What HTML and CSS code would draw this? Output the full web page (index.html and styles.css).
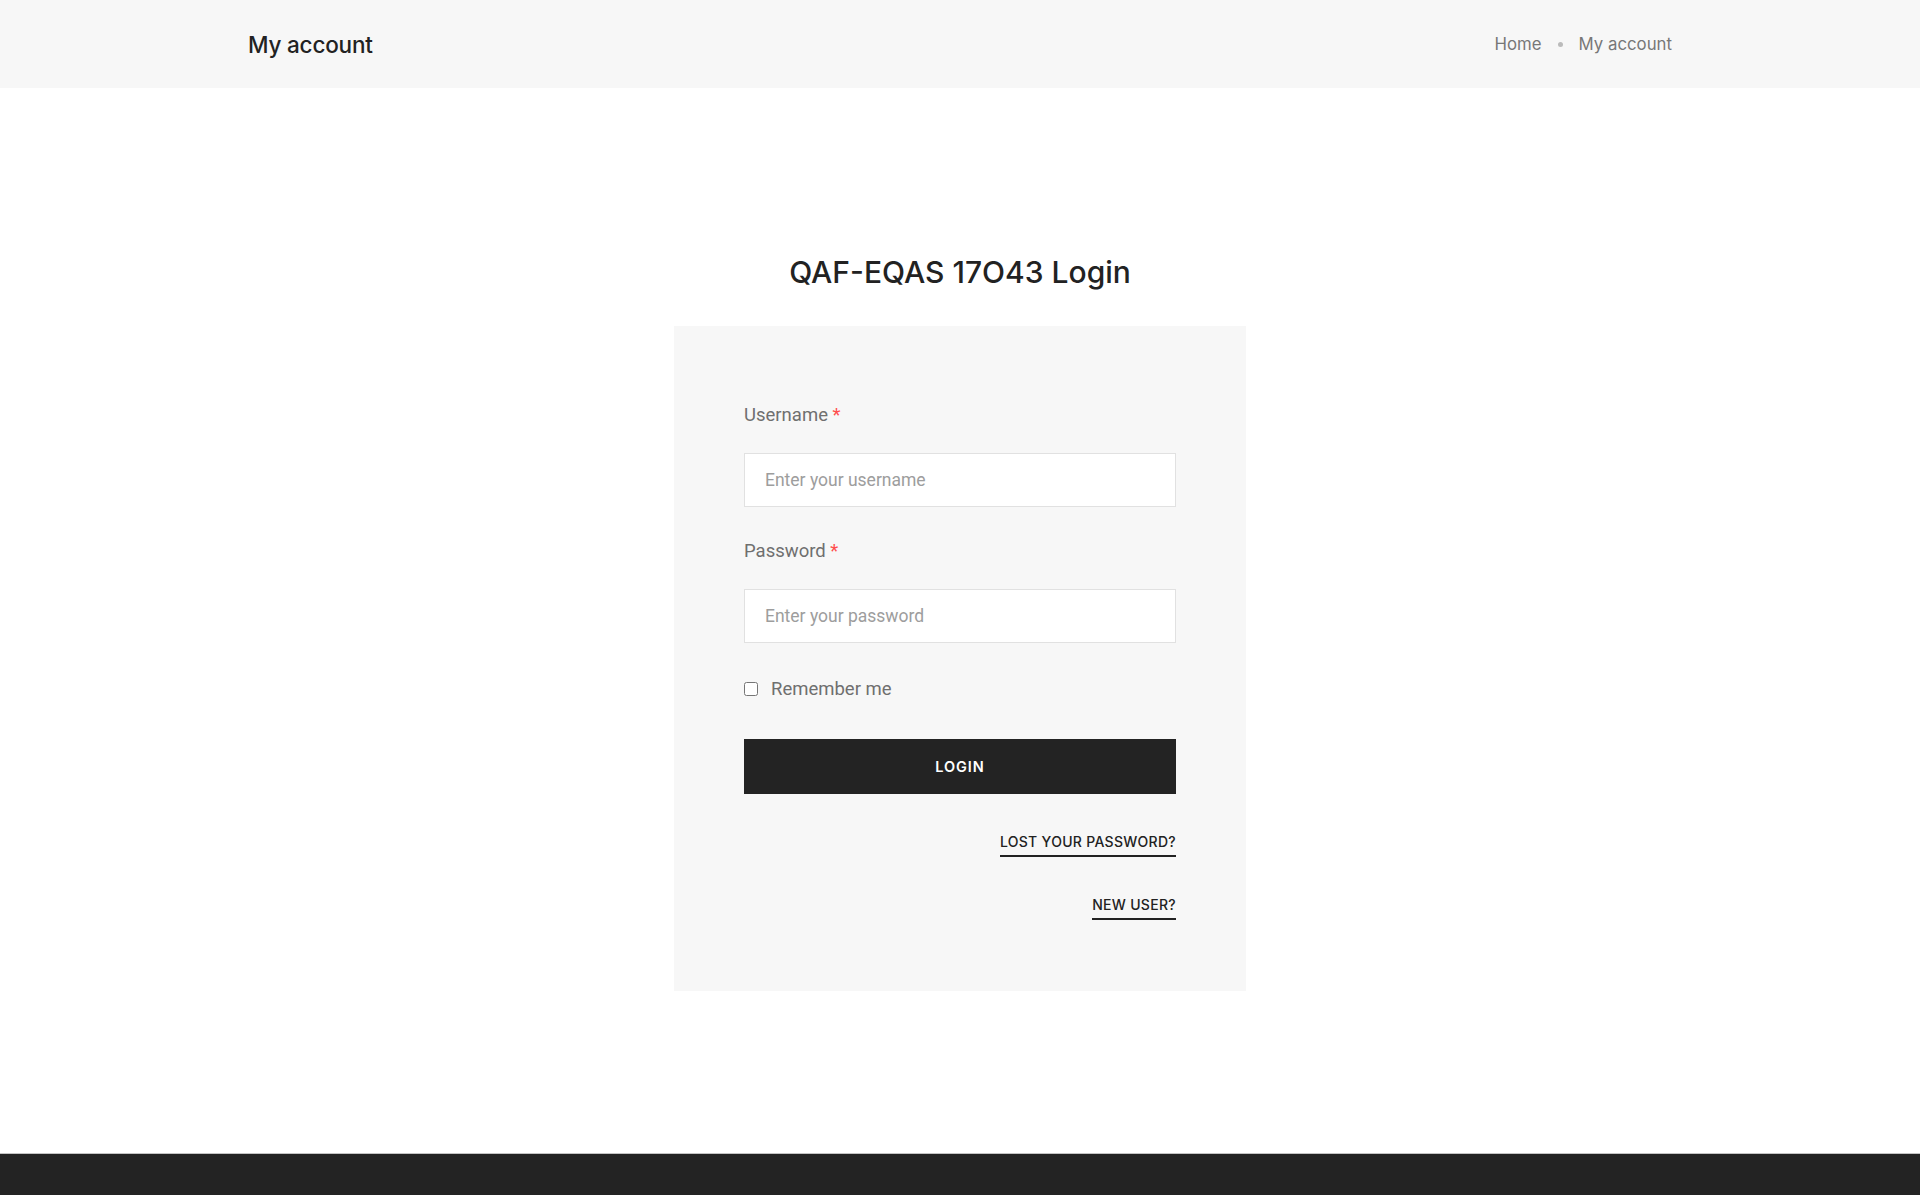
FILE: index.html
```html
<!DOCTYPE html>
<html lang="en">
<head>
    <meta charset="UTF-8">
    <meta name="viewport" content="width=device-width, initial-scale=1.0">
    <title>My account</title>
    <link rel="stylesheet" href="styles.css">
</head>
<body>
    <header class="page-header">
        <div class="container">
            <h1 class="page-title">My account</h1>
            <nav class="breadcrumb">
                <a href="#">Home</a>
                <span class="sep"></span>
                <span>My account</span>
            </nav>
        </div>
    </header>

    <main class="main">
        <h2 class="login-title">QAF-EQAS 17O43 Login</h2>
        <div class="login-box">
            <form id="loginForm">
                <div class="form-group">
                    <label for="username">Username <span class="required">*</span></label>
                    <input type="text" id="username" name="username" placeholder="Enter your username" required>
                </div>
                <div class="form-group">
                    <label for="password">Password <span class="required">*</span></label>
                    <input type="password" id="password" name="password" placeholder="Enter your password" required>
                </div>
                <div class="remember">
                    <input type="checkbox" id="remember" name="remember">
                    <label for="remember">Remember me</label>
                </div>
                <button type="submit" class="btn-login">Login</button>
                <div class="links">
                    <a href="#">Lost your password?</a>
                    <a href="#">New user?</a>
                </div>
            </form>
        </div>
    </main>

    <footer class="page-footer"></footer>
</body>
</html>
```

FILE: styles.css
```css
html, body {
    overflow: hidden;
}
body {
    margin: 0;
    font-family: Roboto, Arial, sans-serif;
    background-color: #fff;
    color: #222;
}
a {
    text-decoration: none;
    color: inherit;
}
.container {
    width: 1424px;
    margin: 0 auto;
}
.page-header {
    background-color: #f7f7f7;
    height: 88px;
}
.page-header .container {
    display: flex;
    justify-content: space-between;
    align-items: center;
    height: 100%;
}
.page-title {
    margin: 0;
    font-family: Inter, sans-serif;
    font-size: 22.5px;
    font-weight: 500;
    letter-spacing: -0.2px;
    color: #222;
}
.breadcrumb {
    display: flex;
    align-items: center;
    font-family: Inter, sans-serif;
    font-size: 16.8px;
    color: #777;
}
.breadcrumb .sep {
    width: 5px;
    height: 5px;
    border-radius: 50%;
    background-color: #bbb;
    margin: 0 16px;
}
.main {
    padding: 164px 0 162px;
}
.login-title {
    margin: 0 0 34px;
    text-align: center;
    font-family: Inter, sans-serif;
    font-size: 30px;
    line-height: 40px;
    font-weight: 500;
    color: #222;
}
.login-box {
    width: 432px;
    margin: 0 auto;
    padding: 75px 70px 71px;
    background-color: #f7f7f7;
}
.form-group {
    margin-bottom: 30px;
}
.form-group label {
    display: block;
    font-size: 18.5px;
    line-height: 28px;
    color: #6f6f6f;
    margin-bottom: 24px;
}
.required {
    color: #ff4d4d;
}
.form-group input {
    display: block;
    width: 100%;
    height: 54px;
    box-sizing: border-box;
    padding: 0 20px;
    font-family: Roboto, sans-serif;
    font-size: 17.5px;
    color: #333;
    background-color: #fff;
    border: 1px solid #e1e1e1;
    border-radius: 0;
    outline: none;
}
.form-group input::placeholder {
    color: #9d9d9d;
}
.remember {
    display: flex;
    align-items: center;
    height: 28px;
    margin-top: 32px;
}
.remember input {
    width: 14px;
    height: 14px;
    margin: 0 13px 0 0;
}
.remember label {
    font-size: 18.5px;
    color: #6f6f6f;
}
.btn-login {
    display: block;
    width: 100%;
    height: 55px;
    margin-top: 36px;
    background-color: #232323;
    color: #fff;
    border: none;
    font-family: Inter, sans-serif;
    font-size: 14.5px;
    font-weight: 600;
    letter-spacing: 0.9px;
    text-transform: uppercase;
    cursor: pointer;
}
.links {
    display: flex;
    flex-direction: column;
    align-items: flex-end;
}
.links a {
    margin-top: 38px;
    font-family: Inter, sans-serif;
    font-size: 14px;
    line-height: 20px;
    font-weight: 500;
    letter-spacing: 0.3px;
    text-transform: uppercase;
    color: #222;
    padding-bottom: 3px;
    border-bottom: 2px solid #222;
}
.page-footer {
    height: 60px;
    background-color: #232323;
    border-top: 1px solid #c4c4c4;
}
```
